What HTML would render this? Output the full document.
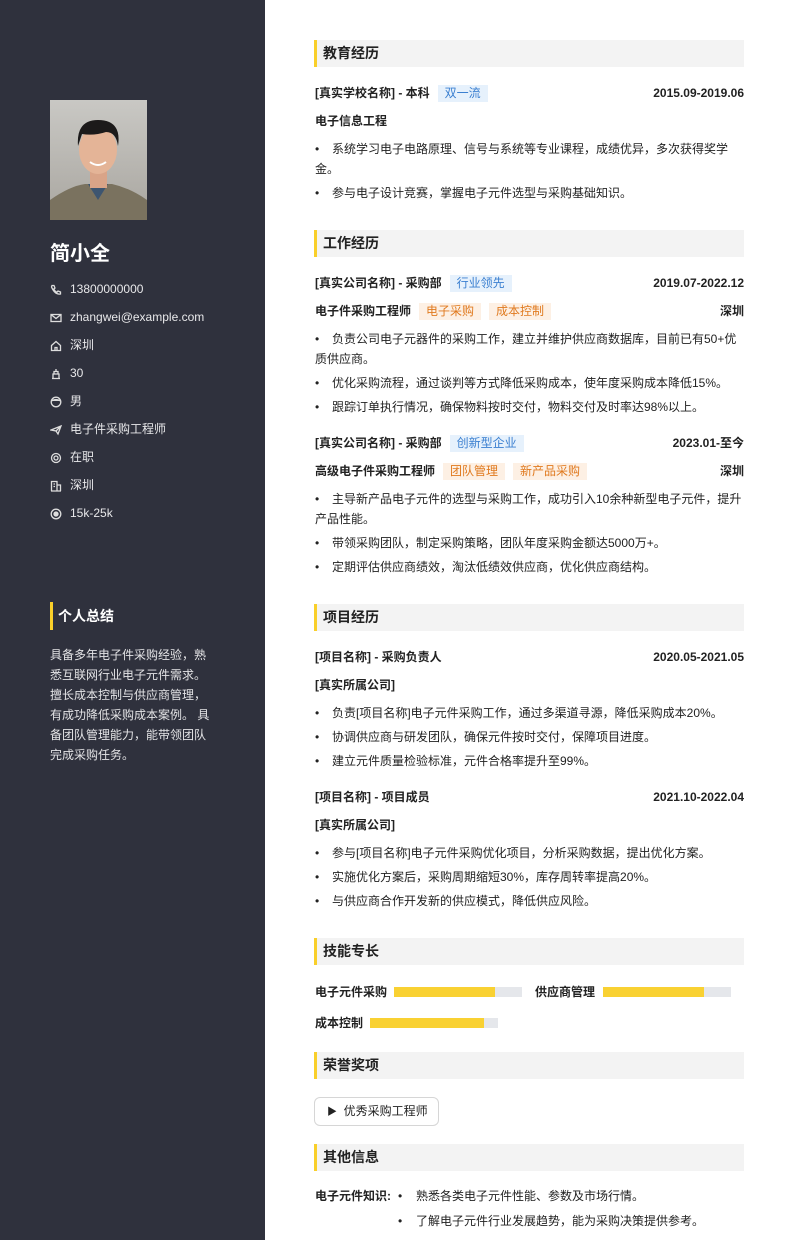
<!DOCTYPE html>
<html><head><meta charset="utf-8"><style>
*{margin:0;padding:0;box-sizing:border-box}
body{width:794px;height:1240px;position:relative;background:#fff;font-family:"Liberation Sans","Noto Sans CJK SC",sans-serif;font-size:12px;color:#222;overflow:hidden}
.side{position:absolute;left:0;top:0;width:265px;height:1240px;background:#2f313d;color:#e8e8ea}
.a{position:absolute;line-height:20px;white-space:nowrap}
.photo{position:absolute;left:50px;top:100px;width:97px;height:120px;background:linear-gradient(#c9c8c4,#a9a6a0);overflow:hidden}
.ci{position:absolute;left:50px;width:12px;height:12px}
.ci svg{width:12px;height:12px;stroke:#ddd;fill:none;stroke-width:1.3}
.hd{position:absolute;left:314px;width:430px;height:27px;background:#f3f3f3;border-left:3px solid #f9cf2a;font-size:14px;font-weight:bold;line-height:27px;padding-left:6px;color:#222}
.b{font-weight:bold}
.r{right:50px}
.li{position:absolute;left:315px;width:430px;line-height:20px}
.li:before{content:"•";position:absolute;left:0}
.li span{display:block;padding-left:17px;text-indent:0}
.tag{display:inline-block;padding:0 7px;line-height:17px;margin-left:8px;font-weight:normal}
.tb{background:#e6f1fc;color:#3a7fd0}
.to{background:#fdf0e4;color:#e07a1f}
.bar{position:absolute;height:10px;background:#e5e7eb}
.bar i{display:block;height:10px;background:#f9d132}
</style></head><body>
<div class="side">
 <div class="photo">
  <svg width="97" height="120" viewBox="0 0 97 120">
   <path d="M0 120 L0 100 Q20 86 35 84 L62 84 Q80 88 97 100 L97 120Z" fill="#7a725f"/>
   <path d="M38 84 L48 100 L58 84Z" fill="#3d5570"/>
   <rect x="40" y="66" width="17" height="22" fill="#d9a488"/>
   <ellipse cx="48" cy="50" rx="19" ry="24" fill="#e4b497"/>
   <path d="M28 46 Q26 20 48 20 Q72 20 68 46 Q66 32 56 32 Q44 36 32 34Z" fill="#1c1a1a"/>
   <path d="M40 62 Q48 68 56 62" stroke="#fff" stroke-width="2" fill="none"/>
  </svg>
 </div>
 <div class="a" style="left:50px;top:241px;font-size:20px;line-height:26px;font-weight:bold;color:#fff">简小全</div>
 <div class="ci" style="top:284px"><svg viewBox="0 0 12 12"><path d="M2 1.5 L4 1.5 L5 4 L3.8 5 Q5 7.5 7 8.2 L8 7 L10.5 8 L10.5 10 Q5 11 1.5 3Z"/></svg></div>
 <div class="a" style="left:70px;top:279px">13800000000</div>
 <div class="ci" style="top:312px"><svg viewBox="0 0 12 12"><rect x="1" y="2.5" width="10" height="7"/><path d="M1 2.5 L6 6.5 L11 2.5"/></svg></div>
 <div class="a" style="left:70px;top:307px">zhangwei@example.com</div>
 <div class="ci" style="top:340px"><svg viewBox="0 0 12 12"><path d="M1.5 5.5 L6 1.5 L10.5 5.5 L10.5 10.5 L1.5 10.5Z M5 10.5 L5 7.5 L7 7.5 L7 10.5"/></svg></div>
 <div class="a" style="left:70px;top:335px">深圳</div>
 <div class="ci" style="top:368px"><svg viewBox="0 0 12 12"><path d="M2 10.5 L10 10.5 M3 10.5 L3 6 L9 6 L9 10.5 M4 6 L4 3.5 L8 3.5 L8 6 M6 1 L6 3.5"/></svg></div>
 <div class="a" style="left:70px;top:363px">30</div>
 <div class="ci" style="top:396px"><svg viewBox="0 0 12 12"><circle cx="6" cy="6" r="4.8"/><path d="M1.5 5 Q6 2 10.5 5" fill="#ddd"/></svg></div>
 <div class="a" style="left:70px;top:391px">男</div>
 <div class="ci" style="top:424px"><svg viewBox="0 0 12 12"><path d="M1 6 L11 2 L8 10 L6 7Z M6 7 L11 2"/></svg></div>
 <div class="a" style="left:70px;top:419px">电子件采购工程师</div>
 <div class="ci" style="top:452px"><svg viewBox="0 0 12 12"><circle cx="6" cy="6" r="4.5"/><circle cx="6" cy="6" r="2"/></svg></div>
 <div class="a" style="left:70px;top:447px">在职</div>
 <div class="ci" style="top:480px"><svg viewBox="0 0 12 12"><path d="M1.5 11 L1.5 1.5 L7 1.5 L7 11 M7 5 L10.5 5 L10.5 11 M1 11 L11 11 M3.5 4 L5 4 M3.5 6.5 L5 6.5"/></svg></div>
 <div class="a" style="left:70px;top:475px">深圳</div>
 <div class="ci" style="top:508px"><svg viewBox="0 0 12 12"><circle cx="6" cy="6" r="4.8"/><circle cx="6" cy="6" r="2" fill="#ddd"/></svg></div>
 <div class="a" style="left:70px;top:503px">15k-25k</div>
 <div style="position:absolute;left:50px;top:602px;width:3px;height:28px;background:#f9cf2a"></div>
 <div class="a" style="left:58px;top:606px;font-size:14px;font-weight:bold;color:#fff">个人总结</div>
 <div style="position:absolute;left:50px;top:645px;width:165px;line-height:20px;color:#e4e4e6">具备多年电子件采购经验，熟悉互联网行业电子元件需求。擅长成本控制与供应商管理，有成功降低采购成本案例。 具备团队管理能力，能带领团队完成采购任务。</div>
</div>

<div class="hd" style="top:40px">教育经历</div>
<div class="a b" style="left:315px;top:83px">[真实学校名称] - 本科<span class="tag tb">双一流</span></div>
<div class="a b r" style="top:83px">2015.09-2019.06</div>
<div class="a b" style="left:315px;top:111px">电子信息工程</div>
<div class="li" style="top:139px"><span>系统学习电子电路原理、信号与系统等专业课程，成绩优异，多次获得奖学</span></div>
<div class="a" style="left:315px;top:159px">金。</div>
<div class="li" style="top:183px"><span>参与电子设计竞赛，掌握电子元件选型与采购基础知识。</span></div>

<div class="hd" style="top:230px">工作经历</div>
<div class="a b" style="left:315px;top:273px">[真实公司名称] - 采购部<span class="tag tb">行业领先</span></div>
<div class="a b r" style="top:273px">2019.07-2022.12</div>
<div class="a b" style="left:315px;top:301px">电子件采购工程师<span class="tag to">电子采购</span><span class="tag to">成本控制</span></div>
<div class="a b r" style="top:301px">深圳</div>
<div class="li" style="top:329px"><span>负责公司电子元器件的采购工作，建立并维护供应商数据库，目前已有50+优</span></div>
<div class="a" style="left:315px;top:349px">质供应商。</div>
<div class="li" style="top:373px"><span>优化采购流程，通过谈判等方式降低采购成本，使年度采购成本降低15%。</span></div>
<div class="li" style="top:397px"><span>跟踪订单执行情况，确保物料按时交付，物料交付及时率达98%以上。</span></div>
<div class="a b" style="left:315px;top:433px">[真实公司名称] - 采购部<span class="tag tb">创新型企业</span></div>
<div class="a b r" style="top:433px">2023.01-至今</div>
<div class="a b" style="left:315px;top:461px">高级电子件采购工程师<span class="tag to">团队管理</span><span class="tag to">新产品采购</span></div>
<div class="a b r" style="top:461px">深圳</div>
<div class="li" style="top:489px"><span>主导新产品电子元件的选型与采购工作，成功引入10余种新型电子元件，提升</span></div>
<div class="a" style="left:315px;top:509px">产品性能。</div>
<div class="li" style="top:533px"><span>带领采购团队，制定采购策略，团队年度采购金额达5000万+。</span></div>
<div class="li" style="top:557px"><span>定期评估供应商绩效，淘汰低绩效供应商，优化供应商结构。</span></div>

<div class="hd" style="top:604px">项目经历</div>
<div class="a b" style="left:315px;top:647px">[项目名称] - 采购负责人</div>
<div class="a b r" style="top:647px">2020.05-2021.05</div>
<div class="a b" style="left:315px;top:675px">[真实所属公司]</div>
<div class="li" style="top:703px"><span>负责[项目名称]电子元件采购工作，通过多渠道寻源，降低采购成本20%。</span></div>
<div class="li" style="top:727px"><span>协调供应商与研发团队，确保元件按时交付，保障项目进度。</span></div>
<div class="li" style="top:751px"><span>建立元件质量检验标准，元件合格率提升至99%。</span></div>
<div class="a b" style="left:315px;top:787px">[项目名称] - 项目成员</div>
<div class="a b r" style="top:787px">2021.10-2022.04</div>
<div class="a b" style="left:315px;top:815px">[真实所属公司]</div>
<div class="li" style="top:843px"><span>参与[项目名称]电子元件采购优化项目，分析采购数据，提出优化方案。</span></div>
<div class="li" style="top:867px"><span>实施优化方案后，采购周期缩短30%，库存周转率提高20%。</span></div>
<div class="li" style="top:891px"><span>与供应商合作开发新的供应模式，降低供应风险。</span></div>

<div class="hd" style="top:938px">技能专长</div>
<div class="a b" style="left:315px;top:982px">电子元件采购</div>
<div class="bar" style="left:394px;top:987px;width:128px"><i style="width:101px"></i></div>
<div class="a b" style="left:535px;top:982px">供应商管理</div>
<div class="bar" style="left:603px;top:987px;width:128px"><i style="width:101px"></i></div>
<div class="a b" style="left:315px;top:1013px">成本控制</div>
<div class="bar" style="left:370px;top:1018px;width:128px"><i style="width:114px"></i></div>

<div class="hd" style="top:1052px">荣誉奖项</div>
<div style="position:absolute;left:314px;top:1097px;width:125px;height:29px;border:1px solid #d6d6d6;border-radius:6px;line-height:27px;padding-left:12px">
 <span style="font-size:10px">▶</span>&nbsp;&nbsp;优秀采购工程师</div>

<div class="hd" style="top:1144px">其他信息</div>
<div class="a b" style="left:315px;top:1186px">电子元件知识:</div>
<div class="a" style="left:398px;top:1186px">•</div>
<div class="a" style="left:416px;top:1186px">熟悉各类电子元件性能、参数及市场行情。</div>
<div class="a" style="left:398px;top:1211px">•</div>
<div class="a" style="left:416px;top:1211px">了解电子元件行业发展趋势，能为采购决策提供参考。</div>
</body></html>
